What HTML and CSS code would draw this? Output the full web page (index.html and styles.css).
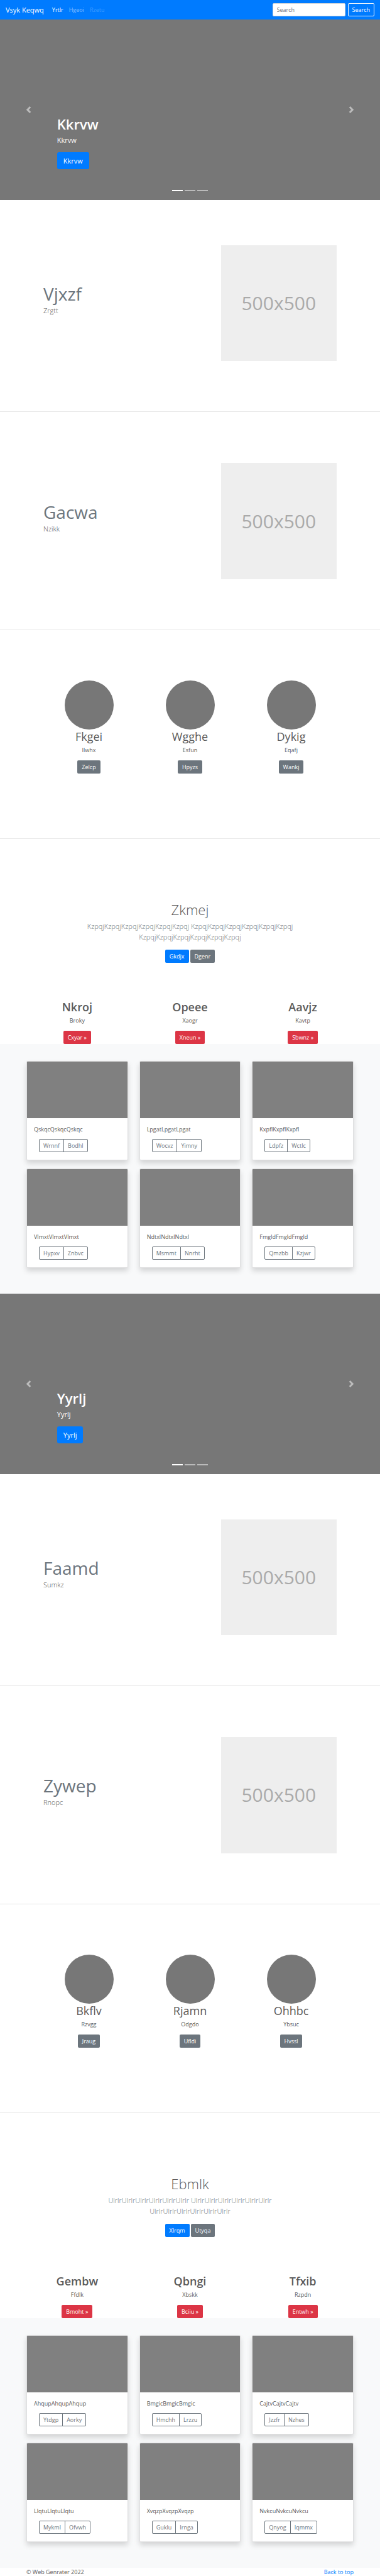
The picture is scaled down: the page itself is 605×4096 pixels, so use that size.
FILE: index.html
```html
<!DOCTYPE html>
<html lang="en">
<head>
<meta charset="utf-8">
<meta name="viewport" content="width=device-width, initial-scale=1">
<title>Vsyk Keqwq</title>
<link rel="stylesheet" href="styles.css">
</head>
<body>
<header class="navbar" id="top">
  <a class="brand" href="#">Vsyk Keqwq</a>
  <nav class="nav-links">
    <a class="nav-link active" href="#">Yrtlr</a>
    <a class="nav-link" href="#">Hgeoi</a>
    <a class="nav-link disabled" href="#">Rzetu</a>
  </nav>
  <form class="search">
    <input class="search-input" type="text" placeholder="Search" aria-label="Search">
    <button class="btn btn-outline-light" type="submit">Search</button>
  </form>
</header>
<main>
  <section class="carousel">
    <div class="caption">
      <h1 class="caption-title">Kkrvw</h1>
      <p class="caption-text">Kkrvw</p>
      <a class="btn btn-large btn-primary" href="#">Kkrvw</a>
    </div>
    <button class="control control-prev" type="button" aria-label="Previous"><svg class="chevron" viewBox="0 0 8 8"><path d="M5.25 0l-4 4 4 4 1.5-1.5-2.5-2.5 2.5-2.5-1.5-1.5z"/></svg></button>
    <button class="control control-next" type="button" aria-label="Next"><svg class="chevron" viewBox="0 0 8 8"><path d="M2.75 0l-1.5 1.5 2.5 2.5-2.5 2.5 1.5 1.5 4-4-4-4z"/></svg></button>
    <div class="indicators"><span class="indicator current"></span><span class="indicator"></span><span class="indicator"></span></div>
  </section>

  <section class="featurette first">
    <div class="featurette-copy">
      <h2 class="featurette-title">Vjxzf</h2>
      <p class="lead">Zrgtt</p>
    </div>
    <div class="placeholder">500x500</div>
  </section>
  <hr class="divider">
  <section class="featurette">
    <div class="featurette-copy">
      <h2 class="featurette-title">Gacwa</h2>
      <p class="lead">Nzikk</p>
    </div>
    <div class="placeholder">500x500</div>
  </section>
  <hr class="divider">
  <section class="marketing">
    <div class="marketing-item">
      <div class="circle"></div>
      <h2 class="item-title">Fkgei</h2>
      <p class="item-text">Ilwhx</p>
      <a class="btn btn-secondary" href="#">Zelcp</a>
    </div>
    <div class="marketing-item">
      <div class="circle"></div>
      <h2 class="item-title">Wgghe</h2>
      <p class="item-text">Esfun</p>
      <a class="btn btn-secondary" href="#">Hpyzs</a>
    </div>
    <div class="marketing-item">
      <div class="circle"></div>
      <h2 class="item-title">Dykig</h2>
      <p class="item-text">Eqafj</p>
      <a class="btn btn-secondary" href="#">Wankj</a>
    </div>
  </section>
  <hr class="divider">
  <section class="intro">
    <h1 class="intro-title">Zkmej</h1>
    <p class="lead">KzpqjKzpqjKzpqjKzpqjKzpqjKzpqj KzpqjKzpqjKzpqjKzpqjKzpqjKzpqj KzpqjKzpqjKzpqjKzpqjKzpqjKzpqj</p>
    <div class="intro-actions">
      <a class="btn btn-primary" href="#">Gkdjx</a>
      <a class="btn btn-secondary" href="#">Dgenr</a>
    </div>
  </section>
  <section class="columns">
    <div class="column">
      <h2 class="item-title strong">Nkroj</h2>
      <p class="item-text">Broky</p>
      <a class="btn btn-danger" href="#">Cxyar »</a>
    </div>
    <div class="column">
      <h2 class="item-title strong">Opeee</h2>
      <p class="item-text">Xaogr</p>
      <a class="btn btn-danger" href="#">Xneun »</a>
    </div>
    <div class="column">
      <h2 class="item-title strong">Aavjz</h2>
      <p class="item-text">Kavtp</p>
      <a class="btn btn-danger" href="#">Sbwnz »</a>
    </div>
  </section>
  <section class="album">
    <article class="card">
      <div class="card-image"></div>
      <div class="card-body">
        <p class="card-text">QskqcQskqcQskqc</p>
        <div class="btn-group"><button class="btn btn-outline" type="button">Wrnnf</button><button class="btn btn-outline" type="button">Bodhl</button></div>
      </div>
    </article>
    <article class="card">
      <div class="card-image"></div>
      <div class="card-body">
        <p class="card-text">LpgatLpgatLpgat</p>
        <div class="btn-group"><button class="btn btn-outline" type="button">Wocvz</button><button class="btn btn-outline" type="button">Yimny</button></div>
      </div>
    </article>
    <article class="card">
      <div class="card-image"></div>
      <div class="card-body">
        <p class="card-text">KxpflKxpflKxpfl</p>
        <div class="btn-group"><button class="btn btn-outline" type="button">Ldpfz</button><button class="btn btn-outline" type="button">Wctlc</button></div>
      </div>
    </article>
    <article class="card">
      <div class="card-image"></div>
      <div class="card-body">
        <p class="card-text">VlmxtVlmxtVlmxt</p>
        <div class="btn-group"><button class="btn btn-outline" type="button">Hypxv</button><button class="btn btn-outline" type="button">Znbvc</button></div>
      </div>
    </article>
    <article class="card">
      <div class="card-image"></div>
      <div class="card-body">
        <p class="card-text">NdtxlNdtxlNdtxl</p>
        <div class="btn-group"><button class="btn btn-outline" type="button">Msmmt</button><button class="btn btn-outline" type="button">Nnrht</button></div>
      </div>
    </article>
    <article class="card">
      <div class="card-image"></div>
      <div class="card-body">
        <p class="card-text">FmgldFmgldFmgld</p>
        <div class="btn-group"><button class="btn btn-outline" type="button">Qmzbb</button><button class="btn btn-outline" type="button">Kzjwr</button></div>
      </div>
    </article>
  </section>

  <section class="carousel">
    <div class="caption">
      <h1 class="caption-title">Yyrlj</h1>
      <p class="caption-text">Yyrlj</p>
      <a class="btn btn-large btn-primary" href="#">Yyrlj</a>
    </div>
    <button class="control control-prev" type="button" aria-label="Previous"><svg class="chevron" viewBox="0 0 8 8"><path d="M5.25 0l-4 4 4 4 1.5-1.5-2.5-2.5 2.5-2.5-1.5-1.5z"/></svg></button>
    <button class="control control-next" type="button" aria-label="Next"><svg class="chevron" viewBox="0 0 8 8"><path d="M2.75 0l-1.5 1.5 2.5 2.5-2.5 2.5 1.5 1.5 4-4-4-4z"/></svg></button>
    <div class="indicators"><span class="indicator current"></span><span class="indicator"></span><span class="indicator"></span></div>
  </section>

  <section class="featurette first">
    <div class="featurette-copy">
      <h2 class="featurette-title">Faamd</h2>
      <p class="lead">Sumkz</p>
    </div>
    <div class="placeholder">500x500</div>
  </section>
  <hr class="divider">
  <section class="featurette">
    <div class="featurette-copy">
      <h2 class="featurette-title">Zywep</h2>
      <p class="lead">Rnopc</p>
    </div>
    <div class="placeholder">500x500</div>
  </section>
  <hr class="divider">
  <section class="marketing">
    <div class="marketing-item">
      <div class="circle"></div>
      <h2 class="item-title">Bkflv</h2>
      <p class="item-text">Rzvgg</p>
      <a class="btn btn-secondary" href="#">Jraug</a>
    </div>
    <div class="marketing-item">
      <div class="circle"></div>
      <h2 class="item-title">Rjamn</h2>
      <p class="item-text">Odgdo</p>
      <a class="btn btn-secondary" href="#">Ufldi</a>
    </div>
    <div class="marketing-item">
      <div class="circle"></div>
      <h2 class="item-title">Ohhbc</h2>
      <p class="item-text">Ybsuc</p>
      <a class="btn btn-secondary" href="#">Hvssl</a>
    </div>
  </section>
  <hr class="divider">
  <section class="intro">
    <h1 class="intro-title">Ebmlk</h1>
    <p class="lead">UlrlrUlrlrUlrlrUlrlrUlrlrUlrlr UlrlrUlrlrUlrlrUlrlrUlrlrUlrlr UlrlrUlrlrUlrlrUlrlrUlrlrUlrlr</p>
    <div class="intro-actions">
      <a class="btn btn-primary" href="#">Xlrqm</a>
      <a class="btn btn-secondary" href="#">Utyqa</a>
    </div>
  </section>
  <section class="columns">
    <div class="column">
      <h2 class="item-title strong">Gembw</h2>
      <p class="item-text">Ffdlk</p>
      <a class="btn btn-danger" href="#">Bmoht »</a>
    </div>
    <div class="column">
      <h2 class="item-title strong">Qbngi</h2>
      <p class="item-text">Xbskk</p>
      <a class="btn btn-danger" href="#">Bciiu »</a>
    </div>
    <div class="column">
      <h2 class="item-title strong">Tfxib</h2>
      <p class="item-text">Rzpdn</p>
      <a class="btn btn-danger" href="#">Entwh »</a>
    </div>
  </section>
  <section class="album">
    <article class="card">
      <div class="card-image"></div>
      <div class="card-body">
        <p class="card-text">AhqupAhqupAhqup</p>
        <div class="btn-group"><button class="btn btn-outline" type="button">Ytdgp</button><button class="btn btn-outline" type="button">Aorky</button></div>
      </div>
    </article>
    <article class="card">
      <div class="card-image"></div>
      <div class="card-body">
        <p class="card-text">BmgicBmgicBmgic</p>
        <div class="btn-group"><button class="btn btn-outline" type="button">Hmchh</button><button class="btn btn-outline" type="button">Lrzzu</button></div>
      </div>
    </article>
    <article class="card">
      <div class="card-image"></div>
      <div class="card-body">
        <p class="card-text">CajtvCajtvCajtv</p>
        <div class="btn-group"><button class="btn btn-outline" type="button">Jzzfr</button><button class="btn btn-outline" type="button">Nzhes</button></div>
      </div>
    </article>
    <article class="card">
      <div class="card-image"></div>
      <div class="card-body">
        <p class="card-text">LlqtuLlqtuLlqtu</p>
        <div class="btn-group"><button class="btn btn-outline" type="button">Mykml</button><button class="btn btn-outline" type="button">Ofvwh</button></div>
      </div>
    </article>
    <article class="card">
      <div class="card-image"></div>
      <div class="card-body">
        <p class="card-text">XvqzpXvqzpXvqzp</p>
        <div class="btn-group"><button class="btn btn-outline" type="button">Guklu</button><button class="btn btn-outline" type="button">Irnga</button></div>
      </div>
    </article>
    <article class="card">
      <div class="card-image"></div>
      <div class="card-body">
        <p class="card-text">NvkcuNvkcuNvkcu</p>
        <div class="btn-group"><button class="btn btn-outline" type="button">Qnyog</button><button class="btn btn-outline" type="button">Iqmmx</button></div>
      </div>
    </article>
  </section>
</main>
<footer class="footer">
  <span>© Web Genrater 2022</span>
  <a class="footer-link" href="#top">Back to top</a>
</footer>
</body>
</html>
```
FILE: styles.css
```css
*, *::before, *::after {
  box-sizing: border-box;
}

body {
  margin: 0;
  background: #fff;
  color: #5a5a5a;
  font-family: "Open Sans", "Noto Sans", sans-serif;
  font-size: 9px;
  line-height: 14px;
}

h1, h2, p {
  margin: 0;
  font-weight: 400;
}

a {
  text-decoration: none;
}

/* Buttons */
.btn {
  display: inline-block;
  height: 21px;
  padding: 3px 6px;
  border: 1px solid transparent;
  border-radius: 2px;
  background: transparent;
  color: #fff;
  font-family: inherit;
  font-size: 9px;
  line-height: 13px;
  text-align: center;
  vertical-align: top;
  white-space: nowrap;
}

.btn-primary { background: #007bff; }
.btn-secondary { background: #6c757d; }
.btn-danger { background: #dc3545; }
.btn-outline-light { border-color: #f8f9fa; }

.btn-outline {
  border-color: #6c757d;
  color: #6c757d;
}

.btn-large {
  height: 27px;
  padding: 4px 9px;
  border-radius: 3px;
  font-size: 11px;
  line-height: 17px;
}

/* Navigation */
.navbar {
  display: flex;
  align-items: center;
  height: 31px;
  padding: 0 9px;
  background: #007bff;
}

.brand {
  margin-right: 13px;
  color: #fff;
  font-size: 11px;
}

.nav-links {
  display: flex;
  gap: 9px;
}

.nav-link { color: rgba(255, 255, 255, .5); }
.nav-link.active { color: #fff; }
.nav-link.disabled { color: rgba(255, 255, 255, .25); }

.search {
  display: flex;
  gap: 4px;
  margin-left: auto;
}

.search-input {
  width: 116px;
  height: 21px;
  padding: 3px 6px;
  border: 1px solid #ced4da;
  border-radius: 2px;
  background: #fff;
  color: #495057;
  font-family: inherit;
  font-size: 9px;
}

.search-input::placeholder {
  color: #6c757d;
  opacity: 1;
}

/* Carousel */
.carousel {
  position: relative;
  display: flex;
  align-items: flex-end;
  height: 287px;
  padding: 0 15% 49px;
  background: #777;
  color: #fff;
}

.caption-title {
  margin-bottom: 4px;
  font-size: 22px;
  font-weight: 600;
  line-height: 26px;
}

.caption-text {
  margin-bottom: 11px;
  font-size: 11px;
  line-height: 17px;
}

.control {
  position: absolute;
  top: 0;
  bottom: 0;
  display: flex;
  align-items: center;
  justify-content: center;
  width: 15%;
  padding: 0;
  border: 0;
  background: none;
  opacity: .5;
}

.control-prev { left: 0; }
.control-next { right: 0; }

.chevron {
  width: 11px;
  height: 11px;
  fill: #fff;
}

.indicators {
  position: absolute;
  right: 0;
  bottom: 14px;
  left: 0;
  display: flex;
  justify-content: center;
  gap: 3px;
}

.indicator {
  width: 17px;
  height: 2px;
  background: #fff;
  opacity: .5;
}

.indicator.current { opacity: 1; }

/* Featurettes */
.featurette {
  display: grid;
  grid-template-columns: 3fr 2fr;
  gap: 6px;
  align-items: center;
  padding: 81px 69px 80px;
}

.featurette.first { padding-top: 72px; }

.featurette-copy { padding-bottom: 9px; }

.featurette-title {
  margin-bottom: 4px;
  color: #6c757d;
  font-size: 28px;
  line-height: 28px;
}

.lead {
  font-size: 11px;
  font-weight: 300;
  line-height: 17px;
}

.placeholder {
  display: flex;
  align-items: center;
  justify-content: center;
  aspect-ratio: 1;
  background: #eee;
  color: #aaa;
  font-size: 30px;
}

.divider {
  height: 1px;
  margin: 0;
  border: 0;
  background: #e6e6e6;
}

/* Circles with captions */
.marketing {
  display: grid;
  grid-template-columns: repeat(3, 1fr);
  padding: 80px 61px 103px;
  text-align: center;
}

.circle {
  width: 78px;
  height: 78px;
  margin: 0 auto;
  border-radius: 50%;
  background: #777;
}

.item-title {
  margin-bottom: 4px;
  font-size: 18px;
  line-height: 22px;
}

.item-title.strong { font-weight: 600; }

.item-text { margin-bottom: 9px; }

/* Intro */
.intro {
  padding: 99px 120px 0;
  text-align: center;
}

.intro-title {
  margin-bottom: 5px;
  font-size: 22px;
  font-weight: 300;
  line-height: 26px;
}

.intro .lead {
  margin-bottom: 12px;
  color: #6c757d;
}

.intro-actions {
  display: flex;
  justify-content: center;
  gap: 2px;
}

.columns {
  display: grid;
  grid-template-columns: repeat(3, 1fr);
  gap: 18px;
  padding: 59px 42px 0;
  text-align: center;
}

/* Album */
.album {
  display: grid;
  grid-template-columns: repeat(3, 1fr);
  gap: 13px 18px;
  padding: 27px 42px 41px;
  background: #f8f9fa;
}

.card {
  overflow: hidden;
  border: 1px solid #dfdfe0;
  border-radius: 2px;
  background: #fff;
  box-shadow: 0 5px 9px rgba(0, 0, 0, .15);
}

.card-image {
  height: 90px;
  background: #808080;
}

.card-body { padding: 11px 11px 12px; }

.card-text { margin-bottom: 8px; }

.btn-group {
  display: flex;
  padding-left: 8px;
}

.btn-group .btn:first-child {
  border-top-right-radius: 0;
  border-bottom-right-radius: 0;
}

.btn-group .btn:last-child {
  margin-left: -1px;
  border-top-left-radius: 0;
  border-bottom-left-radius: 0;
}

/* Footer */
.footer {
  display: flex;
  justify-content: space-between;
  padding: 0 42px;
  line-height: 13px;
}

.footer-link { color: #007bff; }
```
